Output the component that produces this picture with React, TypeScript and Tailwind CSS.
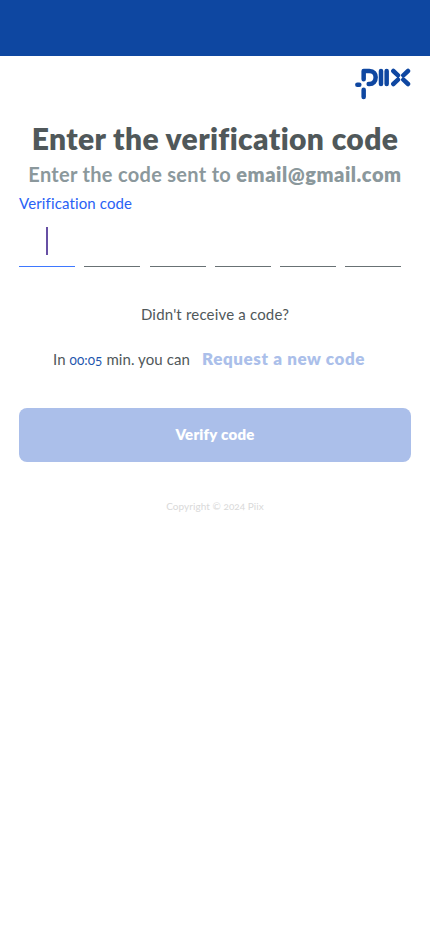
import React from 'react';

function Logo() {
  return (
    <svg width="56" height="32" viewBox="30 54 168 96" fill="none" stroke="#0f47a1" strokeWidth="13.5" strokeLinecap="round" strokeLinejoin="round" aria-label="Piix">
      <path d="M56 88V63H73C87 63 92 72 92 82C92 94 85 102 73 102H71M37 104H43M56 119V141" />
      <path d="M108 63V102M125 63V102M145 63L159 76M189 63L175 76M145 102L159 89M189 102L175 89" />
    </svg>
  );
}

const cells = [0, 1, 2, 3, 4, 5];

export default function App() {
  return (
    <main className="flex h-[932px] w-[430px] flex-col bg-white font-['Lato',sans-serif] text-[#50585a] [font-variant-numeric:oldstyle-nums] [font-variant-ligatures:none]">
      <div className="h-14 shrink-0 bg-[#0e47a1]" />
      <header className="flex h-[63px] justify-end pr-[19px] pt-3">
        <Logo />
      </header>
      <h1 className="h-[38px] whitespace-nowrap text-center text-[30px] font-extrabold leading-[38px] tracking-[0.38px]">Enter the verification code</h1>
      <h2 className="mt-[3px] h-[28px] whitespace-nowrap text-center text-[20px] font-bold leading-[28px] tracking-[0.3px] text-[#8b989c]">Enter the code sent to <span className="font-extrabold tracking-[0.54px]">email@gmail.com</span></h2>
      <section className="px-[19px] pt-[4px]">
        <p className="h-[22px] text-[15px] leading-[22px] tracking-[0.13px] text-[#2962f5]">Verification code</p>
        <div className="mt-[5px] flex gap-[9.3px]">
          {cells.map((cell) => (
            <div key={cell} className={`flex h-[48px] w-[56px] shrink-0 items-start justify-center border-b pt-[8px] ${cell === 0 ? 'border-[#3e78ff]' : 'border-[#687174]'}`}>
              {cell === 0 && <span className="h-[28px] w-[2px] bg-[#6750a4]" />}
            </div>
          ))}
        </div>
      </section>
      <p className="mt-[36px] h-[22px] text-center text-[15px] leading-[22px] tracking-[0.18px]">Didn't receive a code?</p>
      <div className="mt-[22px] flex h-[24px] items-baseline whitespace-nowrap pl-[53px] leading-[24px]">
        <p className="w-[149px] text-[15px] tracking-[0.08px]">In <span className="text-[13.5px] text-[#1c55ad]">00:05</span> min. you can</p>
        <button className="text-[17px] font-extrabold tracking-[0.6px] text-[#abbfea]">Request a new code</button>
      </div>
      <button className="mx-[19px] mt-[37px] h-[54px] shrink-0 rounded-lg bg-[#abbfea] pb-[2px] text-[15px] font-extrabold tracking-[0.25px] text-white">Verify code</button>
      <footer className="mt-[36px] text-center text-[10px] leading-[16px] tracking-[0.05px] text-[#d9d9d9]">Copyright © 2024 Piix</footer>
    </main>
  );
}
